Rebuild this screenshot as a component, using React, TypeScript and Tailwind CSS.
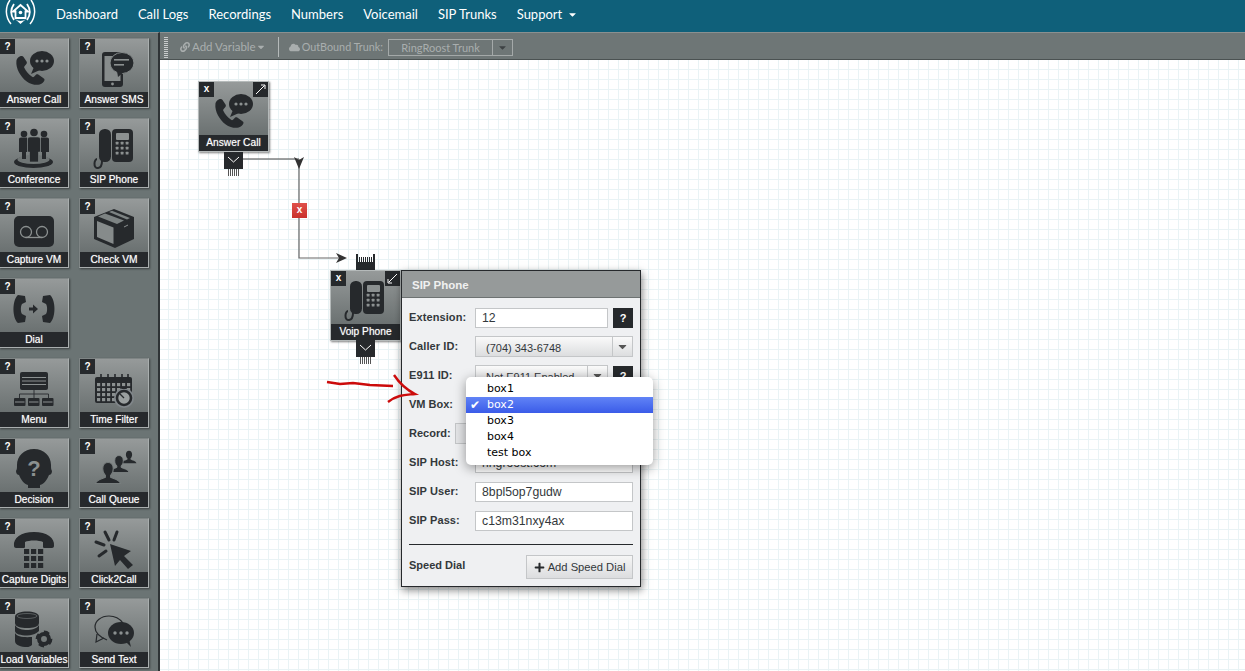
import type { ReactNode } from 'react';
import { FaCaretDown, FaCloud, FaLink, FaPlus } from 'react-icons/fa';

const DARK = '#26292c';
const LIGHT = '#8b9090';

function Handset({ x, y, s = 1 }: { x: number; y: number; s?: number }) {
  return (
    <path
      transform={`translate(${x} ${y}) scale(${s})`}
      fill={DARK}
      d="M7 1C5 1 2 3 1.5 6C.5 14 6 23 12 27.5C17 31 22 32 26 31C28.5 30.5 30.5 28 31 26.5C31.2 25.5 30.8 25 30 24.4L24.5 20.5C23.7 20 23 20 22.3 20.6L20 23C19.3 23.5 18.6 23.5 18 23C14 20 11.5 17 9.8 13.5C9.5 12.8 9.6 12 10.2 11.5L12 9.5C12.6 8.8 12.7 8 12.3 7.2L9 2C8.6 1.3 8 1 7 1Z"
    />
  );
}

function Svg({ children }: { children: ReactNode }) {
  return (
    <svg viewBox="1 1 68 53" className="w-[68px] h-[53px]">
      {children}
    </svg>
  );
}

function Gear({ x, y, r }: { x: number; y: number; r: number }) {
  return (
    <g>
      <circle cx={x} cy={y} r={r * 0.62} fill="none" stroke={DARK} strokeWidth={r * 0.5} />
      <circle cx={x} cy={y} r={r * 0.9} fill="none" stroke={DARK} strokeWidth={r * 0.3} strokeDasharray={`${r * 0.7} ${r * 0.7}`} />
    </g>
  );
}

function AnswerCallIcon() {
  return (
    <Svg>
      <Handset x={16} y={17} s={0.95} />
      <ellipse cx={43} cy={23} rx={12} ry={10} fill={DARK} />
      <path d="M35 29L32 36L41 32Z" fill={DARK} />
      <circle cx={38} cy={23} r={1.6} fill={LIGHT} />
      <circle cx={43} cy={23} r={1.6} fill={LIGHT} />
      <circle cx={48} cy={23} r={1.6} fill={LIGHT} />
    </Svg>
  );
}

function AnswerSmsIcon() {
  return (
    <Svg>
      <rect x={23} y={14} width={21} height={35} rx={3} fill={DARK} />
      <rect x={25.5} y={18} width={16} height={25} fill="#878c8c" />
      <circle cx={33.5} cy={46} r={1.4} fill={LIGHT} />
      <ellipse cx={43} cy={25} rx={12} ry={10.5} fill={DARK} stroke="#878c8c" strokeWidth={1} />
      <path d="M38 33L39 39L45 34Z" fill={DARK} />
      <rect x={35} y={21} width={15} height={1.6} fill={LIGHT} />
      <rect x={35} y={26} width={10} height={1.6} fill={LIGHT} />
    </Svg>
  );
}

function ConferenceIcon() {
  return (
    <Svg>
      <ellipse cx={34.5} cy={44} rx={19.5} ry={6} fill={DARK} />
      <ellipse cx={34.5} cy={41.5} rx={16} ry={4.5} fill="#6f7575" />
      <circle cx={25} cy={16} r={3.3} fill={DARK} />
      <circle cx={45} cy={16} r={3.3} fill={DARK} />
      <path d="M20 21Q20 19.5 22 19.5H28V34H27V41H23V34H20ZM50 21Q50 19.5 48 19.5H42V34H43V41H47V34H50Z" fill={DARK} />
      <circle cx={35} cy={14.5} r={3.8} fill={DARK} />
      <path d="M28.5 21Q28.5 19 31 19H39Q41.5 19 41.5 21V34H39.5V44H30.5V34H28.5Z" fill={DARK} stroke="#7e8484" strokeWidth={0.6} />
    </Svg>
  );
}

function SipPhoneIcon() {
  return (
    <Svg>
      <rect x={20} y={11} width={12} height={33} rx={5.5} fill={DARK} />
      <path d="M23 43C23 52 15 52 15.5 45.5C15.5 43 17 41 18 41" fill="none" stroke={DARK} strokeWidth={2} />
      <rect x={33} y={11} width={21} height={33} rx={4} fill={DARK} />
      <rect x={37} y={15} width={13} height={7} rx={1} fill={LIGHT} />
      {[25, 30, 35].map((y) =>
        [38, 43, 48].map((x) => <rect key={`${x}-${y}`} x={x - 1.3} y={y - 1.3} width={2.8} height={2.8} rx={0.5} fill={LIGHT} />),
      )}
    </Svg>
  );
}

function CaptureVmIcon() {
  return (
    <Svg>
      <rect x={15} y={18} width={40} height={31} rx={5} fill={DARK} />
      <circle cx={27} cy={34} r={5.5} fill="none" stroke={LIGHT} strokeWidth={1.3} />
      <circle cx={43} cy={34} r={5.5} fill="none" stroke={LIGHT} strokeWidth={1.3} />
      <path d="M27 39.5H43" stroke={LIGHT} strokeWidth={1.3} />
    </Svg>
  );
}

function CheckVmIcon() {
  return (
    <Svg>
      <path d="M35 11L55 19V41L36 50L15 41V19Z" fill={DARK} />
      <path d="M18 23L34.5 29.5V46L18 39Z" fill="#868b8b" />
      <path d="M19 18.5L26 15.5L45 22.5L38 26Z" fill="#7d8383" />
      <path d="M30 14L33 12.8L51 20L48 21.5Z" fill="#7d8383" />
      <path d="M45 29L49 27" stroke={LIGHT} strokeWidth={1} />
    </Svg>
  );
}

function DialIcon() {
  return (
    <Svg>
      <path d="M19 17L26 18L27 24L23 26C21.5 28 21.5 34 23 36L27 38L26 44L19 45C13 40 13 22 19 17Z" fill={DARK} />
      <path d="M51 17L44 18L43 24L47 26C48.5 28 48.5 34 47 36L43 38L44 44L51 45C57 40 57 22 51 17Z" fill={DARK} />
      <path d="M30 29.5H34V26.5L39 31L34 35.5V32.5H30Z" fill={DARK} />
    </Svg>
  );
}

function MenuIcon() {
  return (
    <Svg>
      <rect x={21} y={14} width={28} height={18} rx={2} fill={DARK} />
      <path d="M23 19.5H47M23 23H47M23 26.5H47" stroke={LIGHT} strokeWidth={1} />
      <path d="M35 32V36M20.5 40V36H49.5V40M35 36V40" fill="none" stroke={DARK} strokeWidth={0.9} />
      {[15, 29, 43].map((x) => (
        <g key={x}>
          <rect x={x} y={40} width={11.5} height={8} rx={1} fill={DARK} />
          <path d={`M${x + 1} 44H${x + 10.5}`} stroke={LIGHT} strokeWidth={1} />
        </g>
      ))}
    </Svg>
  );
}

function TimeFilterIcon() {
  return (
    <Svg>
      <rect x={16} y={19} width={37} height={26} rx={2} fill={DARK} />
      {[25, 30, 35, 40].map((y) =>
        [18, 23, 28, 33, 38, 43, 48].map((x) => <rect key={`${x}-${y}`} x={x} y={y} width={3.2} height={3.2} fill={LIGHT} />),
      )}
      {[22, 29, 36, 43, 49].map((x) => (
        <rect key={x} x={x - 0.8} y={16} width={1.6} height={6} fill={DARK} />
      ))}
      <circle cx={45} cy={40} r={10} fill="#80868a" />
      <circle cx={45} cy={40} r={7} fill="#9a9f9f" stroke={DARK} strokeWidth={2.6} />
      <rect x={42.5} y={28.5} width={5} height={2.5} fill={DARK} />
      <path d="M45 40L41 36" stroke={DARK} strokeWidth={1.2} />
    </Svg>
  );
}

function DecisionIcon() {
  return (
    <Svg>
      <path d="M35 11C45 11 52 18 52 27C52 30 52 31 53 33C53 36 51 37 50 37C48 42 45 46 41 47V50H29V47C25 46 22 42 20 37C19 37 17 36 17 33C18 31 18 30 18 27C18 18 25 11 35 11Z" fill={DARK} />
      <text x={35} y={38} textAnchor="middle" fontFamily="Liberation Sans, sans-serif" fontWeight={700} fontSize={22} fill={LIGHT}>
        ?
      </text>
    </Svg>
  );
}

function CallQueueIcon() {
  const person = (cx: number, cy: number, s: number, edge?: string) => (
    <path
      transform={`translate(${cx} ${cy}) scale(${s})`}
      d="M0 -10C3 -10 5 -7.5 5 -4C5 -1 4 1 2.5 2.2V4C5 5.5 11 6 12 10H-12C-11 6 -5 5.5 -2.5 4V2.2C-4 1 -5 -1 -5 -4C-5 -7.5 -3 -10 0 -10Z"
      fill={DARK}
      stroke={edge}
      strokeWidth={edge ? 1 : 0}
    />
  );
  return (
    <Svg>
      {person(50, 19, 0.62)}
      {person(40, 26, 0.85, '#7f8585')}
      {person(29, 35, 1.05, '#787e7e')}
    </Svg>
  );
}

function CaptureDigitsIcon() {
  return (
    <Svg>
      <path d="M15 28C14 20 22 14 35 14C48 14 56 20 55 28C55 29 54 30 53 30H45C44 30 44 29 44 28V24C40 22 30 22 26 24V28C26 29 26 30 25 30H17C16 30 15 29 15 28Z" fill={DARK} />
      {[31, 38, 45].map((y) =>
        [25, 32, 39].map((x) => <rect key={`${x}-${y}`} x={x} y={y} width={5.2} height={5} fill={DARK} />),
      )}
    </Svg>
  );
}

function ClickIcon() {
  return (
    <Svg>
      <path d="M31 26L52 33L45 38L54 47L49 51L41 42L36 48Z" fill={DARK} />
      <path d="M26 14L30 22M38 14L35 22M17 24L25 27M20 38L27 33" stroke={DARK} strokeWidth={3} strokeLinecap="round" />
    </Svg>
  );
}

function LoadVariablesIcon() {
  return (
    <Svg>
      <path d="M16 19C16 15 22 13.5 28 13.5C34 13.5 40 15 40 19V25C40 29 34 30 28 30C22 30 16 29 16 25Z" fill={DARK} />
      <path d="M16 27C18 31 24 32 28 32C32 32 38 31 40 27V33C38 35 36 36 34 36.5C32 37 30 37.5 28 37.5C22 37.5 16 36 16 33Z" fill={DARK} />
      <path d="M16 35C18 39 25 39.5 33 39V47C31 48.5 30 49 28 49C22 49 16 47 16 43Z" fill={DARK} />
      <ellipse cx={28} cy={18} rx={10} ry={2.5} fill={DARK} stroke={LIGHT} strokeWidth={0.5} />
      <Gear x={45} y={41} r={8} />
    </Svg>
  );
}

function SendTextIcon() {
  return (
    <Svg>
      <path d="M28 42C21 39 16 35 16 29C16 23 22 18 30 18C36 18 41 21 44 25" fill="none" stroke={DARK} strokeWidth={1.2} />
      <path d="M18 36L17 44L25 40" fill="none" stroke={DARK} strokeWidth={1.2} />
      <ellipse cx={42} cy={35} rx={13} ry={11} fill={DARK} />
      <path d="M46 43L52 49L50 41Z" fill={DARK} />
      <circle cx={36} cy={35} r={1.7} fill={LIGHT} />
      <circle cx={42} cy={35} r={1.7} fill={LIGHT} />
      <circle cx={48} cy={35} r={1.7} fill={LIGHT} />
    </Svg>
  );
}

function Tile({ label, icon }: { label: string; icon: ReactNode }) {
  return (
    <div className="relative flex flex-col w-[70px] h-[70px] border border-[#a9aeae] border-t-[#7f8585] border-l-[#7f8585] bg-gradient-to-b from-[#969a9a] to-[#5f6666] shadow-[1px_1px_2px_rgba(0,0,0,0.45)]">
      {icon}
      <div className="h-[15px] bg-[#26292c] text-white text-[10.2px] leading-[15px] text-center whitespace-nowrap [text-shadow:0_0_1px_rgba(255,255,255,0.6)]">{label}</div>
      <span className="absolute top-0 left-0 w-[15px] h-[15px] bg-[#26292c] text-white text-[10px] font-bold leading-[15px] text-center">?</span>
    </div>
  );
}

const tools = [
  ['Answer Call', <AnswerCallIcon />],
  ['Answer SMS', <AnswerSmsIcon />],
  ['Conference', <ConferenceIcon />],
  ['SIP Phone', <SipPhoneIcon />],
  ['Capture VM', <CaptureVmIcon />],
  ['Check VM', <CheckVmIcon />],
  ['Dial', <DialIcon />],
  null,
  ['Menu', <MenuIcon />],
  ['Time Filter', <TimeFilterIcon />],
  ['Decision', <DecisionIcon />],
  ['Call Queue', <CallQueueIcon />],
  ['Capture Digits', <CaptureDigitsIcon />],
  ['Click2Call', <ClickIcon />],
  ['Load Variables', <LoadVariablesIcon />],
  ['Send Text', <SendTextIcon />],
] as const;

function Plug({ className, up = false }: { className: string; up?: boolean }) {
  return (
    <div className={`absolute w-[19px] h-[24px] ${className}`}>
      <svg viewBox="0 0 19 24" className="w-[19px] h-[24px]">
        {up ? (
          <>
            <path d="M0 0H2V8H17V0H19V16H0Z" fill={DARK} />
            <path d="M3.5 3V9M5.5 3V9M7.5 3V9M9.5 3V9M11.5 3V9M13.5 3V9M15.5 3V9" stroke={DARK} strokeWidth={1} />
          </>
        ) : (
          <>
            <rect width={19} height={17} fill={DARK} />
            <path d="M4 5L9.5 10L15 5" fill="none" stroke="#fff" strokeWidth={1} />
            <path d="M4.5 17V24M6.5 17V24M8.5 17V24M10.5 17V24M12.5 17V24M14.5 17V24" stroke="#555" strokeWidth={1} />
          </>
        )}
      </svg>
    </div>
  );
}

function NodeCorner({ open }: { open: boolean }) {
  return (
    <svg viewBox="0 0 15 15" className="absolute top-0 right-0 w-[15px] h-[15px] bg-[#26292c]">
      {open ? (
        <>
          <path d="M3 12L11.5 3.5" stroke="#fff" strokeWidth={1} />
          <path d="M8 3H12V7" fill="none" stroke="#fff" strokeWidth={1} />
        </>
      ) : (
        <>
          <path d="M12 3L4 11" stroke="#fff" strokeWidth={1} />
          <path d="M3 8V12H7" fill="none" stroke="#fff" strokeWidth={1} />
        </>
      )}
    </svg>
  );
}

function Node({ label, icon, className, open }: { label: string; icon: ReactNode; className: string; open: boolean }) {
  return (
    <div className={`absolute flex flex-col w-[71px] h-[71px] border border-[#b5baba] bg-gradient-to-b from-[#969a9a] to-[#5f6666] shadow-[1px_1px_2px_rgba(0,0,0,0.5)] ${className}`}>
      {icon}
      <div className="h-[16px] bg-[#26292c] text-white text-[10.2px] leading-[15px] text-center whitespace-nowrap [text-shadow:0_0_1px_rgba(255,255,255,0.6)]">{label}</div>
      <span className="absolute top-0 left-0 w-[15px] h-[15px] bg-[#26292c] text-white text-[10px] font-bold leading-[14px] text-center">x</span>
      <NodeCorner open={open} />
    </div>
  );
}

function Help() {
  return <span className="ml-[5px] w-[20px] h-[20px] shrink-0 bg-[#26292c] text-white text-[11px] font-bold leading-[20px] text-center">?</span>;
}

function Field({ label, children }: { label: string; children: ReactNode }) {
  return (
    <div className="flex items-center h-[21px]">
      <span className="w-[66px] shrink-0 font-bold text-[11px] text-[#33383b] tracking-[0.1px]">{label}</span>
      {children}
    </div>
  );
}

function TextInput({ value }: { value: string }) {
  return <div className="h-[20px] flex-1 border border-[#c4c6c8] bg-white pl-[6px] text-[12.25px] leading-[19px] text-[#33383b]">{value}</div>;
}

function SelectBox({ value }: { value: string }) {
  return (
    <div className="flex flex-1 min-w-0 h-[21px] border border-[#c4c6c8] bg-gradient-to-b from-[#fafafa] to-[#dcdddf] text-[11px] text-[#33383b] leading-[22px]">
      <span className="flex-1 pl-[10px] whitespace-nowrap overflow-hidden">{value}</span>
      <span className="flex items-center justify-center w-[20px] border-l border-[#c4c6c8] text-[#555]">
        <FaCaretDown size={13} />
      </span>
    </div>
  );
}

function SipPanel() {
  return (
    <div className="absolute left-[241px] top-[210px] w-[240px] h-[317px] border border-[#26292c] bg-[#eff0f2] shadow-[1px_3px_8px_rgba(0,0,0,0.5)]">
      <div className="h-[27px] bg-[#969a9a] border-b border-[#6d7272] pl-[10px] text-[11.5px] font-bold leading-[28px] text-[#f0f0f0]">SIP Phone</div>
      <div className="flex flex-col gap-[8px] pt-[9px] px-[7px]">
        <Field label="Extension:">
          <TextInput value="12" />
          <Help />
        </Field>
        <Field label="Caller ID:">
          <SelectBox value="(704) 343-6748" />
        </Field>
        <Field label="E911 ID:">
          <SelectBox value="Not E911 Enabled" />
          <Help />
        </Field>
        <div className="h-[21px] font-bold text-[11px] leading-[21px] text-[#33383b]">VM Box:</div>
        <div className="flex items-center h-[21px]">
          <span className="w-[46px] shrink-0 font-bold text-[11px] text-[#33383b]">Record:</span>
          <div className="w-[60px] h-[21px] border border-[#c4c6c8] bg-[#e4e5e7]" />
        </div>
        <Field label="SIP Host:">
          <TextInput value="ringroost.com" />
        </Field>
        <Field label="SIP User:">
          <TextInput value="8bpl5op7gudw" />
        </Field>
        <Field label="SIP Pass:">
          <TextInput value="c13m31nxy4ax" />
        </Field>
        <div className="mt-[5px] border-t border-[#26292c]" />
        <div className="flex items-start justify-between pt-[2px]">
          <span className="pt-[2px] font-bold text-[11px] text-[#33383b]">Speed Dial</span>
          <button className="flex items-center gap-[3px] w-[107px] h-[24px] justify-center border border-[#c4c6c8] bg-gradient-to-b from-[#f6f6f6] to-[#dcdddf] text-[11.2px] text-[#33383b]">
            <FaPlus size={11} className="text-[#26292c]" /> Add Speed Dial
          </button>
        </div>
      </div>
    </div>
  );
}

function BoxMenu() {
  const items = ['box1', 'box2', 'box3', 'box4', 'test box'];
  return (
    <div className="absolute left-[306px] top-[317px] w-[187px] h-[88px] py-[4px] rounded-[5px] bg-white shadow-[0_3px_12px_rgba(0,0,0,0.4)] font-['DejaVu_Sans',sans-serif] text-[11px] leading-[16px] text-black">
      {items.map((item) => (
        <div key={item} className={item === 'box2' ? 'relative pl-[21px] text-white bg-gradient-to-b from-[#6183f6] to-[#3b5be8]' : 'pl-[21px]'}>
          {item === 'box2' && <span className="absolute left-[4px] top-0 text-[12px]">✔</span>}
          {item}
        </div>
      ))}
    </div>
  );
}

function Wires() {
  return (
    <svg viewBox="0 0 1085 611" className="absolute inset-0 w-[1085px] h-[611px] pointer-events-none">
      <path d="M72 99H139" stroke="#444" strokeWidth={1.2} fill="none" />
      <path d="M139 99V198H180" stroke="#666" strokeWidth={1.2} fill="none" />
      <path d="M134 97L139 100L144 97L139 109Z" fill="#333" />
      <path d="M176 193L187 198L176 203L179 198Z" fill="#333" />
    </svg>
  );
}

function RedMarks() {
  return (
    <svg viewBox="0 0 1085 611" className="absolute inset-0 w-[1085px] h-[611px] pointer-events-none">
      <path d="M167 322L180 324L193 323L210 325L233 326" stroke="#cc0b0b" strokeWidth={2.4} fill="none" />
      <path d="M234 315C238 321 243 328 255 334C247 335 238 334 228 342" stroke="#cc0b0b" strokeWidth={2.4} fill="none" />
    </svg>
  );
}

export default function App() {
  const nav = ['Dashboard', 'Call Logs', 'Recordings', 'Numbers', 'Voicemail', 'SIP Trunks'];
  return (
    <div className="flex flex-col w-full h-screen overflow-hidden bg-white font-['Liberation_Sans',sans-serif]">
      <header className="flex items-start shrink-0 h-[32px] bg-[#0f607a] font-['Lato',sans-serif] text-[13px] text-white">
        <svg viewBox="0 0 40 30" className="w-[40px] h-[30px] shrink-0">
          <path d="M20.5 5L28 11.5H25.5V18H15.5V11.5H13Z" fill="none" stroke="#fff" strokeWidth={1.8} />
          <circle cx={20.5} cy={12.5} r={1.8} fill="#fff" />
          <path d="M14 4C10.5 9 10.5 15 14 20M27 4C30.5 9 30.5 15 27 20" fill="none" stroke="#fff" strokeWidth={1.8} />
          <path d="M10 0C5 7 5 17 11 24M31 0C36 7 36 17 30 24" fill="none" stroke="#fff" strokeWidth={1.5} />
          <path d="M15 19C18 21.5 23 21.5 26 19L20.5 24Z" fill="#fff" />
        </svg>
        <nav className="flex items-center mt-[5px] ml-[16px] gap-[20px] leading-[18px] whitespace-nowrap">
          {nav.map((item) => (
            <span key={item}>{item}</span>
          ))}
          <span className="flex items-center gap-[5px]">
            Support <FaCaretDown size={11} />
          </span>
        </nav>
      </header>
      <div className="flex flex-1 min-h-0">
        <aside className="w-[160px] shrink-0 bg-[#6b7474] border-t border-[#8a9090] border-r-2 border-r-[#2f3436] pt-[5px] pl-0">
          <div className="grid grid-cols-[70px_70px] gap-[10px] -ml-[1px]">
            {tools.map((tool, i) => (tool ? <Tile key={tool[0]} label={tool[0]} icon={tool[1]} /> : <div key={i} />))}
          </div>
        </aside>
        <main className="flex flex-col flex-1 min-w-0">
          <div className="flex items-center shrink-0 h-[28px] pt-[2px] bg-[#6e7676] border-t border-[#8a9090] border-b border-b-[#4b5252] font-['Lato',sans-serif] text-[11.5px] text-[#a9aeae]">
            <span className="ml-[4px] w-[4px] h-[21px] bg-[repeating-linear-gradient(to_bottom,#c8cccc_0,#c8cccc_1px,transparent_1px,transparent_2px)]" />
            <FaLink size={10} className="ml-[12px]" />
            <span className="ml-[2px]">Add Variable</span>
            <FaCaretDown size={10} />
            <span className="ml-[12px] h-[20px] border-l border-[#b5baba]" />
            <FaCloud size={11} className="ml-[10px]" />
            <span className="ml-[2px] text-[10.8px]">OutBound Trunk:</span>
            <div className="flex ml-[5px] h-[17px] border border-[#a4a9a9] text-[11px] leading-[15px]">
              <span className="w-[103px] text-center">RingRoost Trunk</span>
              <span className="flex items-center justify-center w-[20px] border-l border-[#a4a9a9] text-[#3d4244]">
                <FaCaretDown size={11} />
              </span>
            </div>
          </div>
          <div className="relative flex-1 overflow-hidden bg-white bg-[linear-gradient(to_right,#e9f3f5_1px,transparent_1px),linear-gradient(to_bottom,#e9f3f5_1px,transparent_1px)] bg-[size:10px_10px] bg-[position:8px_9px]">
            <Wires />
            <span className="absolute left-[132px] top-[143px] w-[15px] h-[15px] bg-gradient-to-b from-[#e0504a] to-[#c9302c] text-white text-[10px] font-bold leading-[14px] text-center">x</span>
            <Node label="Answer Call" icon={<AnswerCallIcon />} open className="left-[38px] top-[21px]" />
            <Plug className="left-[64px] top-[92px]" />
            <Plug up className="left-[196px] top-[194px]" />
            <Node label="Voip Phone" icon={<SipPhoneIcon />} open={false} className="left-[170px] top-[210px]" />
            <Plug className="left-[196px] top-[280px]" />
            <SipPanel />
            <RedMarks />
            <BoxMenu />
          </div>
        </main>
      </div>
    </div>
  );
}
